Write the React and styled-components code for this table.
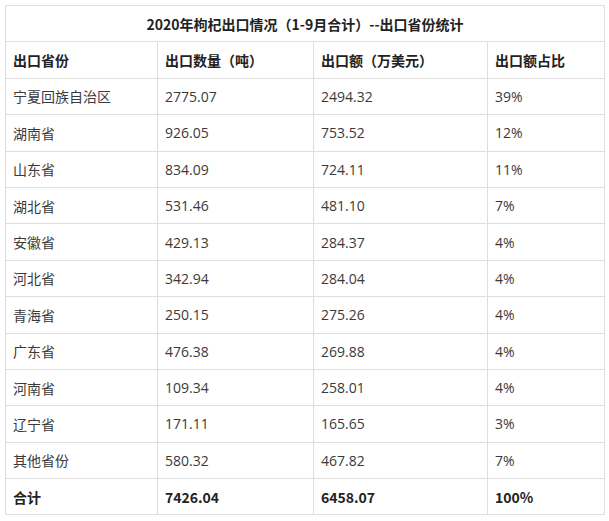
import React from "react";
import styled, { createGlobalStyle } from "styled-components";

const rows = [
  ["宁夏回族自治区", "2775.07", "2494.32", "39%"],
  ["湖南省", "926.05", "753.52", "12%"],
  ["山东省", "834.09", "724.11", "11%"],
  ["湖北省", "531.46", "481.10", "7%"],
  ["安徽省", "429.13", "284.37", "4%"],
  ["河北省", "342.94", "284.04", "4%"],
  ["青海省", "250.15", "275.26", "4%"],
  ["广东省", "476.38", "269.88", "4%"],
  ["河南省", "109.34", "258.01", "4%"],
  ["辽宁省", "171.11", "165.65", "3%"],
  ["其他省份", "580.32", "467.82", "7%"],
];

const App = () => {
  return (
    <>
      <GlobalStyle />
      <Table>
        <colgroup>
          <col style={{ width: 152 }} />
          <col style={{ width: 156 }} />
          <col style={{ width: 174 }} />
          <col style={{ width: 117 }} />
        </colgroup>
        <tbody>
          <Row>
            <TitleCell colSpan={4}>
              2020年枸杞出口情况（1-9月合计）--出口省份统计
            </TitleCell>
          </Row>
          <Row>
            <Cell $bold>出口省份</Cell>
            <Cell $bold>出口数量（吨）</Cell>
            <Cell $bold>出口额（万美元）</Cell>
            <Cell $bold>出口额占比</Cell>
          </Row>
          {rows.map((r) => (
            <Row key={r[0]}>
              <Cell>{r[0]}</Cell>
              <Cell $num>{r[1]}</Cell>
              <Cell $num>{r[2]}</Cell>
              <Cell $num>{r[3]}</Cell>
            </Row>
          ))}
          <Row>
            <Cell $bold>合计</Cell>
            <Cell $bold>7426.04</Cell>
            <Cell $bold>6458.07</Cell>
            <Cell $bold>100%</Cell>
          </Row>
        </tbody>
      </Table>
    </>
  );
};

export default App;

const GlobalStyle = createGlobalStyle`
  body {
    margin: 0;
    padding: 5px;
    background: #fff;
    font-family: "Noto Sans CJK SC", "Noto Sans", sans-serif;
  }
`;

const Table = styled.table`
  border-collapse: collapse;
  table-layout: fixed;
  width: 600px;
  font-size: 14px;
  color: #333;
`;

const Row = styled.tr`
  height: 36.4px;
`;

const Cell = styled.td`
  border: 1px solid #dedede;
  padding: 0 7px;
  vertical-align: middle;
  white-space: nowrap;
  font-weight: ${(p) => (p.$bold ? 700 : 400)};
  color: ${(p) => (p.$bold ? "#222" : "#3a3a3a")};
  font-family: ${(p) =>
    p.$num
      ? `"Open Sans", "Noto Sans CJK SC", sans-serif`
      : `"Noto Sans CJK SC", "Noto Sans", sans-serif`};
`;

const TitleCell = styled(Cell)`
  text-align: center;
  font-weight: 700;
  color: #222;
`;
